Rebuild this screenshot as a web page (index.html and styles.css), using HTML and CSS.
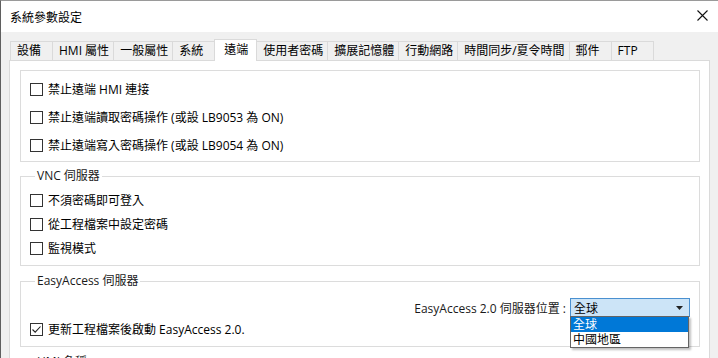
FILE: index.html
```html
<!DOCTYPE html>
<html lang="zh-Hant">
<head>
    <meta charset="utf-8" />
    <title>系統參數設定</title>
    <link rel="stylesheet" href="styles.css">
</head>
<body>
    <div class="window">
        <div class="titlebar">
            <span class="title">系統參數設定</span>
            <svg class="close" width="11" height="11" viewBox="0 0 11 11">
                <path d="M0.5 0.5 L10.5 10.5 M10.5 0.5 L0.5 10.5" stroke="#111" stroke-width="1.1" fill="none" />
            </svg>
        </div>
        <div class="content">
            <div class="tabs">
                <div class="tab">設備</div>
                <div class="tab">HMI 屬性</div>
                <div class="tab">一般屬性</div>
                <div class="tab">系統</div>
                <div class="tab active">遠端</div>
                <div class="tab">使用者密碼</div>
                <div class="tab">擴展記憶體</div>
                <div class="tab">行動網路</div>
                <div class="tab">時間同步/夏令時間</div>
                <div class="tab">郵件</div>
                <div class="tab">FTP</div>
            </div>
            <div class="panel">
                <div class="group plain">
                    <label class="row tall"><span class="box"></span>禁止遠端 HMI 連接</label>
                    <label class="row tall"><span class="box"></span>禁止遠端讀取密碼操作 (或設 LB9053 為 ON)</label>
                    <label class="row tall"><span class="box"></span>禁止遠端寫入密碼操作 (或設 LB9054 為 ON)</label>
                </div>
                <fieldset class="group vnc">
                    <legend>VNC 伺服器</legend>
                    <label class="row"><span class="box"></span>不須密碼即可登入</label>
                    <label class="row"><span class="box"></span>從工程檔案中設定密碼</label>
                    <label class="row"><span class="box"></span>監視模式</label>
                </fieldset>
                <fieldset class="group easy">
                    <legend>EasyAccess 伺服器</legend>
                    <div class="server-row">
                        <span class="server-label">EasyAccess 2.0 伺服器位置 :</span>
                        <div class="select">
                            <span class="select-value">全球</span>
                            <svg class="arrow" width="7" height="4" viewBox="0 0 7 4"><path d="M0 0 H7 L3.5 4 Z" fill="#222" /></svg>
                            <ul class="options">
                                <li class="option selected">全球</li>
                                <li class="option">中國地區</li>
                            </ul>
                        </div>
                    </div>
                    <label class="row check-row"><span class="box checked">
                        <svg width="11" height="11" viewBox="0 0 11 11"><path d="M1.5 5.5 L4.2 8.2 L9.5 2.5" stroke="#222" stroke-width="1.1" fill="none" /></svg>
                    </span>更新工程檔案後啟動 EasyAccess 2.0.</label>
                </fieldset>
                <fieldset class="group last">
                    <legend>HMI 名稱</legend>
                </fieldset>
            </div>
        </div>
    </div>
</body>
</html>
```

FILE: styles.css
```css
* {
    box-sizing: border-box;
}

html, body {
    margin: 0;
    width: 718px;
    height: 358px;
    overflow: hidden;
}

body {
    background: #f0f0f0;
    font-family: "Open Sans", "Noto Sans CJK TC", sans-serif;
    font-size: 12px;
    color: #000;
}

.window {
    height: 358px;
    overflow: hidden;
    border-top: 1px solid #9a9a9a;
    border-left: 1px solid #5f5f5f;
    background: #f0f0f0;
}

.titlebar {
    height: 31px;
    background: #fff;
    display: flex;
    align-items: center;
    justify-content: space-between;
    padding: 0 10px 0 9px;
}

.title {
    font-family: "Noto Sans CJK TC", sans-serif;
    font-size: 12px;
}

.close {
    display: block;
    margin-top: -2px;
}

.content {
    padding: 7px 8px 0 8px;
}

.tabs {
    display: flex;
    align-items: flex-end;
    height: 21px;
    padding-left: 1px;
    position: relative;
    z-index: 1;
}

.tab {
    height: 19px;
    min-width: 43px;
    padding: 0 4px 0 6px;
    border: 1px solid #dadada;
    border-bottom: none;
    margin-right: -1px;
    background: #f0f0f0;
    line-height: 17px;
    white-space: nowrap;
}

.tab.active {
    height: 22px;
    margin-bottom: -1px;
    padding: 0 8px 0 9px;
    background: #fff;
    line-height: 20px;
    position: relative;
    z-index: 2;
}

.panel {
    background: #fff;
    border: 1px solid #dadada;
    height: 310px;
    overflow: hidden;
    padding: 9px 9px 0 10px;
}

.group {
    border: 1px solid #dcdcdc;
    margin: 0;
    min-width: 0;
}

.group legend {
    padding: 0 2px;
    margin-left: 5px;
    line-height: 16px;
    color: #1a1a1a;
}

.plain {
    padding: 4px 9px 2px 9px;
}

.row {
    display: flex;
    align-items: center;
    gap: 5px;
    height: 24px;
}

.row.tall {
    height: 28px;
}

.box {
    width: 13px;
    height: 13px;
    border: 1px solid #333;
    background: #fff;
    display: flex;
    align-items: center;
    justify-content: center;
    flex-shrink: 0;
}

.vnc {
    margin-top: 6px;
    padding: 4px 9px 5px 9px;
}

.easy {
    margin-top: 7px;
    padding: 9px 9px 7px 9px;
}

.server-row {
    display: flex;
    justify-content: flex-end;
    align-items: center;
    gap: 4px;
    height: 19px;
}

.server-label {
    color: #1a1a1a;
}

.select {
    position: relative;
    width: 120px;
    height: 19px;
    border: 1px solid #4a90d0;
    background: #cce4f7;
    display: flex;
    align-items: center;
    justify-content: space-between;
    padding: 0 6px 0 3px;
}

.arrow {
    display: block;
}

.options {
    position: absolute;
    left: -1px;
    top: 17px;
    width: 119px;
    margin: 0;
    padding: 0;
    list-style: none;
    background: #fff;
    border: 1px solid #646464;
    box-shadow: 2px 2px 2px rgba(0, 0, 0, 0.25);
    z-index: 5;
}

.option {
    height: 15px;
    line-height: 15px;
    padding-left: 2px;
}

.option.selected {
    background: #0078d7;
    color: #fff;
}

.check-row {
    margin-top: 2px;
    height: 20px;
}

.last {
    margin-top: 7px;
    height: 40px;
    padding: 0 9px;
}
```
